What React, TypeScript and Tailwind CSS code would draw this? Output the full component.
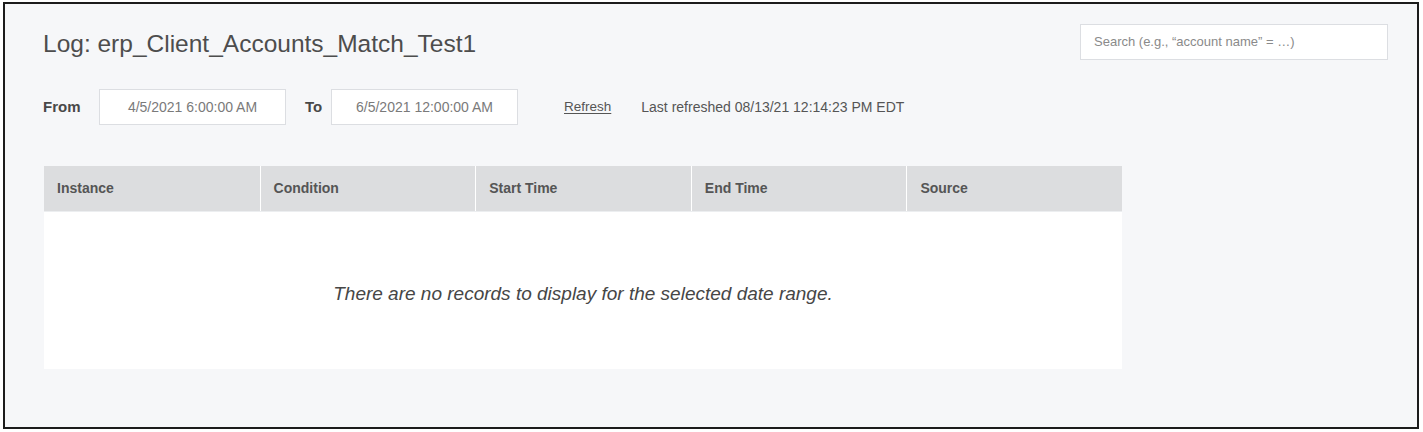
const columns = ["Instance", "Condition", "Start Time", "End Time", "Source"];

function DateField({ value }: { value: string }) {
  return (
    <div className="flex h-[36px] w-[187px] items-center justify-center border border-[#dcdee2] bg-white text-[14px] text-[#7a7a7a]">
      {value}
    </div>
  );
}

export default function App() {
  return (
    <div className="h-[432px] w-[1423px] bg-white pl-[3px] pt-[2px] font-['Liberation_Sans',Arial,sans-serif]">
      <div className="flex h-[427px] w-[1416px] flex-col border-2 border-[#1c1c1c] bg-[#f6f7f9] pl-[38px] pr-[29px]">
        {/* Header */}
        <div className="flex items-start justify-between pt-[20px]">
          <h1 className="pt-[6px] text-[24.5px] leading-[28px] text-[#4d4d4d]">
            Log: erp_Client_Accounts_Match_Test1
          </h1>
          <div className="flex h-[36px] w-[308px] items-center border border-[#dcdee2] bg-white px-[13px] text-[13px] text-[#8a8a8a]">
            Search (e.g., “account name” = …)
          </div>
        </div>

        {/* Date range */}
        <div className="mt-[29px] flex items-center">
          <span className="w-[56px] text-[15px] font-bold text-[#484848]">From</span>
          <DateField value="4/5/2021 6:00:00 AM" />
          <span className="ml-[19px] w-[26px] text-[15px] font-bold text-[#484848]">To</span>
          <DateField value="6/5/2021 12:00:00 AM" />
          <a className="ml-[46px] text-[13.5px] text-[#555] underline underline-offset-2">Refresh</a>
          <span className="ml-[30px] text-[14px] text-[#555]">
            Last refreshed 08/13/21 12:14:23 PM EDT
          </span>
        </div>

        {/* Table */}
        <div className="ml-[1px] mt-[41px] w-[1078px]">
          <div className="grid h-[46px] grid-cols-5 border-b border-[#eceef0] bg-[#dcdddf]">
            {columns.map((c, i) => (
              <div
                key={c}
                className={`flex items-center px-[13px] text-[14px] font-bold text-[#555] ${i > 0 ? "border-l border-white" : ""}`}
              >
                {c}
              </div>
            ))}
          </div>
          <div className="flex h-[157px] items-center justify-center bg-white pt-[8px] text-[19px] italic text-[#464646]">
            There are no records to display for the selected date range.
          </div>
        </div>
      </div>
    </div>
  );
}
